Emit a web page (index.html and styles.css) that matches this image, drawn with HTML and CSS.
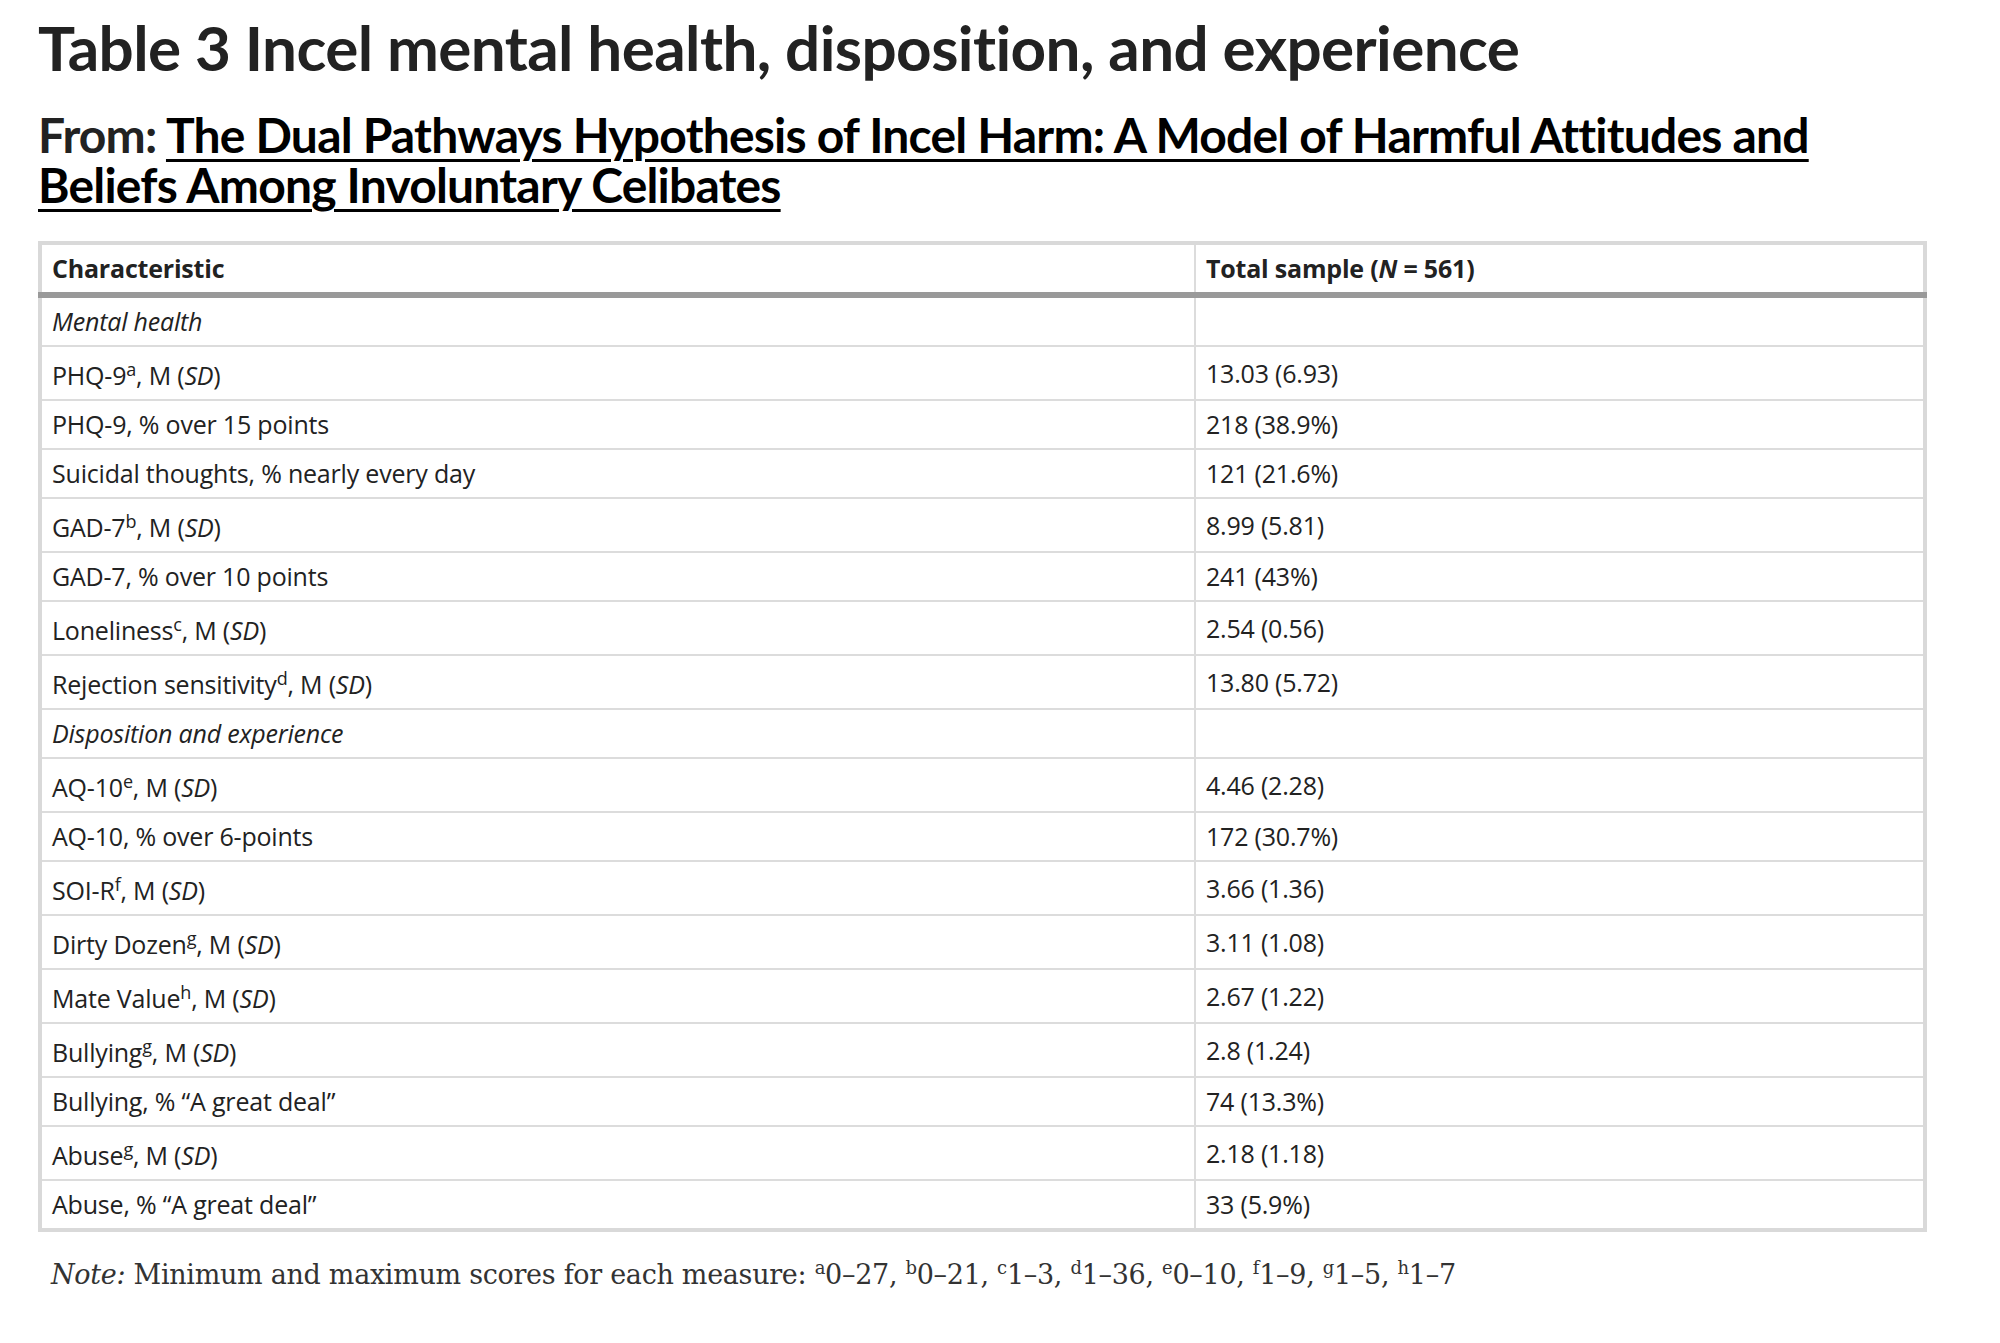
FILE: index.html
```html
<!DOCTYPE html>
<html lang="en">
<head>
<meta charset="utf-8">
<title>Table 3 Incel mental health, disposition, and experience</title>
<link rel="stylesheet" href="styles.css">
</head>
<body>
<main class="page">
  <h1 class="title">Table 3 Incel mental health, disposition, and experience</h1>
  <h2 class="from">From: <a class="from-link" href="#">The Dual Pathways Hypothesis of Incel Harm: A Model of Harmful Attitudes and Beliefs Among Involuntary Celibates</a></h2>
  <table class="data">
    <colgroup><col class="col-a"><col class="col-b"></colgroup>
    <thead>
      <tr><th>Characteristic</th><th>Total sample (<i>N</i> = 561)</th></tr>
    </thead>
    <tbody>
      <tr><td><i>Mental health</i></td><td></td></tr>
      <tr><td>PHQ-9<sup>a</sup>, M (<i>SD</i>)</td><td>13.03 (6.93)</td></tr>
      <tr><td>PHQ-9, % over 15 points</td><td>218 (38.9%)</td></tr>
      <tr><td>Suicidal thoughts, % nearly every day</td><td>121 (21.6%)</td></tr>
      <tr><td>GAD-7<sup>b</sup>, M (<i>SD</i>)</td><td>8.99 (5.81)</td></tr>
      <tr><td>GAD-7, % over 10 points</td><td>241 (43%)</td></tr>
      <tr><td>Loneliness<sup>c</sup>, M (<i>SD</i>)</td><td>2.54 (0.56)</td></tr>
      <tr><td>Rejection sensitivity<sup>d</sup>, M (<i>SD</i>)</td><td>13.80 (5.72)</td></tr>
      <tr><td><i>Disposition and experience</i></td><td></td></tr>
      <tr><td>AQ-10<sup>e</sup>, M (<i>SD</i>)</td><td>4.46 (2.28)</td></tr>
      <tr><td>AQ-10, % over 6-points</td><td>172 (30.7%)</td></tr>
      <tr><td>SOI-R<sup>f</sup>, M (<i>SD</i>)</td><td>3.66 (1.36)</td></tr>
      <tr><td>Dirty Dozen<sup>g</sup>, M (<i>SD</i>)</td><td>3.11 (1.08)</td></tr>
      <tr><td>Mate Value<sup>h</sup>, M (<i>SD</i>)</td><td>2.67 (1.22)</td></tr>
      <tr><td>Bullying<sup>g</sup>, M (<i>SD</i>)</td><td>2.8 (1.24)</td></tr>
      <tr><td>Bullying, % “A great deal”</td><td>74 (13.3%)</td></tr>
      <tr><td>Abuse<sup>g</sup>, M (<i>SD</i>)</td><td>2.18 (1.18)</td></tr>
      <tr><td>Abuse, % “A great deal”</td><td>33 (5.9%)</td></tr>
    </tbody>
  </table>
  <p class="note"><i>Note:</i> Minimum and maximum scores for each measure: <sup>a</sup>0–27, <sup>b</sup>0–21, <sup>c</sup>1–3, <sup>d</sup>1–36, <sup>e</sup>0–10, <sup>f</sup>1–9, <sup>g</sup>1–5, <sup>h</sup>1–7</p>
</main>
</body>
</html>
```

FILE: styles.css
```css
html, body {
  margin: 0;
  padding: 0;
  background: #ffffff;
}

.page {
  padding: 0 73px 0 38px;
  font-family: "Open Sans", "Noto Sans", sans-serif;
  color: #222222;
}

.title {
  margin: 0;
  padding-top: 9px;
  font-family: "Lato", "Open Sans", sans-serif;
  font-weight: 700;
  font-size: 62px;
  line-height: 76px;
  letter-spacing: -0.6px;
  color: #222222;
}

.from {
  margin: 25px 0 0 0;
  font-family: "Lato", "Open Sans", sans-serif;
  font-weight: 700;
  font-size: 48px;
  line-height: 50px;
  letter-spacing: -0.8px;
  color: #222222;
}

.from-link {
  color: #000000;
  text-decoration: underline;
  text-decoration-thickness: 3px;
  text-underline-offset: 6px;
}

.data {
  margin-top: 31px;
  width: 1889px;
  border-collapse: collapse;
  border: 4px solid #d9d9d9;
  font-size: 25px;
  line-height: 27px;
  letter-spacing: -0.2px;
  color: #222222;
}

.col-a {
  width: 1155px;
}

.data th,
.data td {
  padding: 10px 10px;
  text-align: left;
  vertical-align: middle;
}

.data th {
  font-weight: 700;
  border-bottom: 6px solid #999999;
}

.data th:first-child {
  border-right: 2px solid #dcdcdc;
}

.data td {
  font-weight: 400;
  border-bottom: 2px solid #dcdcdc;
}

.data td:first-child {
  border-right: 2px solid #dcdcdc;
}

.data sup {
  font-size: 18px;
  line-height: normal;
  vertical-align: 9px;
}

.note {
  margin: 26px 0 0 13px;
  font-family: "DejaVu Serif", "Liberation Serif", serif;
  font-size: 27px;
  line-height: 34px;
  letter-spacing: -0.3px;
  color: #333333;
}

.note sup {
  font-size: 18px;
  line-height: 0;
  vertical-align: 10px;
}
```
